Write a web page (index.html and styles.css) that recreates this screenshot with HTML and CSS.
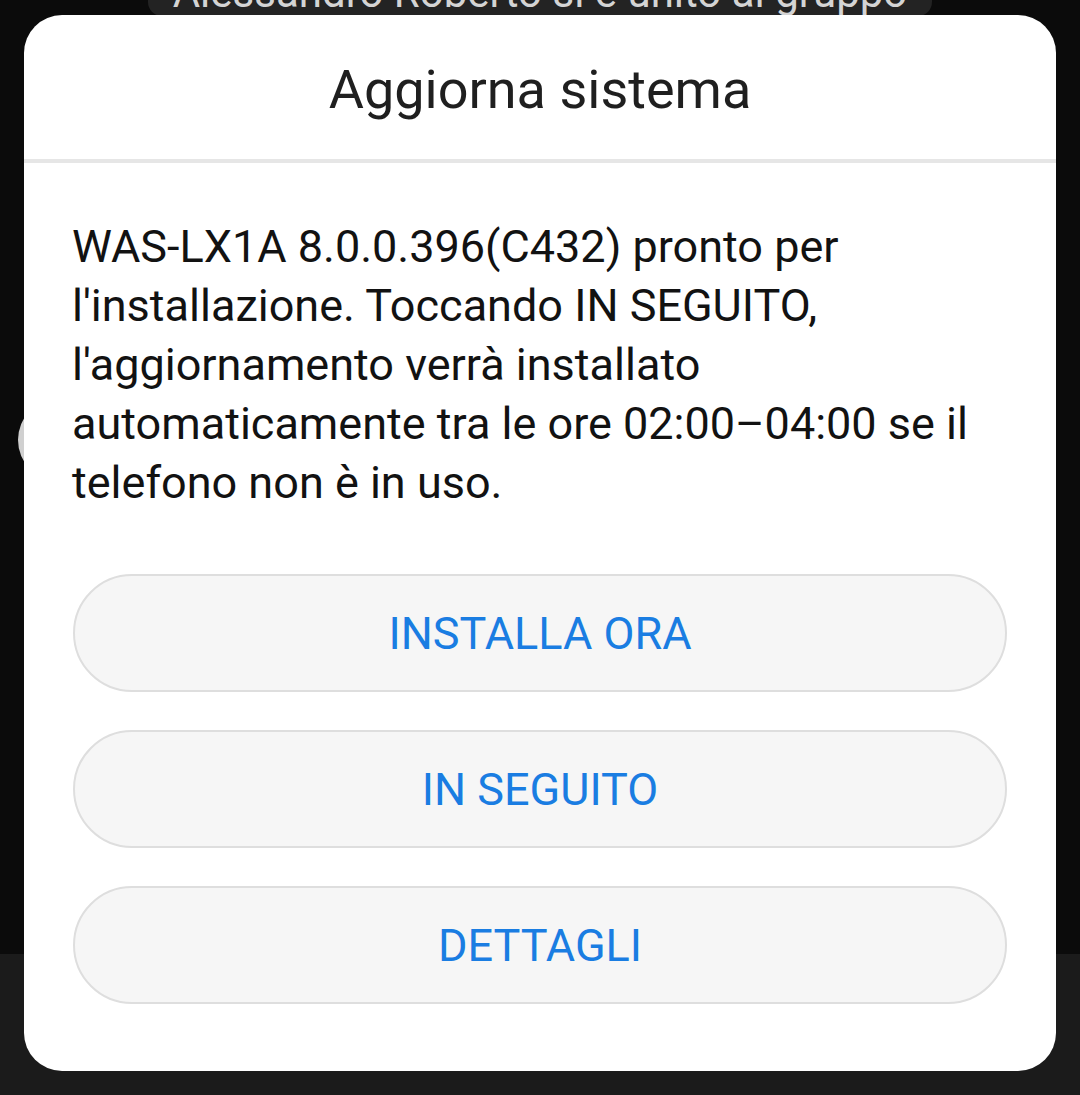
FILE: index.html
```html
<!DOCTYPE html>
<html lang="it">
<head>
<meta charset="utf-8">
<title>Aggiorna sistema</title>
<link rel="stylesheet" href="styles.css">
</head>
<body>
<div class="screen">
  <div class="backdrop-top">
    <div class="toast"><span class="toast-text">Alessandro Roberto si è unito al gruppo</span></div>
    <div class="side-bubble"></div>
  </div>
  <div class="backdrop-bottom"></div>

  <div class="dialog" role="dialog">
    <div class="dialog-title">Aggiorna sistema</div>
    <div class="divider"></div>
    <p class="dialog-message">WAS-LX1A 8.0.0.396(C432) pronto per l'installazione. Toccando IN SEGUITO, l'aggiornamento verrà installato automaticamente tra le ore 02:00–04:00 se il telefono non è in uso.</p>
    <div class="actions">
      <button class="btn">INSTALLA ORA</button>
      <button class="btn">IN SEGUITO</button>
      <button class="btn">DETTAGLI</button>
    </div>
  </div>
</div>
</body>
</html>
```

FILE: styles.css
```css
html, body {
  margin: 0;
  padding: 0;
}

body {
  background: #0b0b0b;
  font-family: Roboto, "Noto Sans", "Liberation Sans", sans-serif;
}

.screen {
  position: relative;
  width: 1080px;
  height: 1095px;
  overflow: hidden;
  display: flex;
  flex-direction: column;
}

.backdrop-top {
  position: relative;
  height: 954px;
  background: #0b0b0b;
}

.backdrop-bottom {
  flex: 1;
  background: #1b1b1b;
}

.toast {
  position: absolute;
  left: 148px;
  top: 0;
  width: 784px;
  height: 16px;
  border-radius: 0 0 14px 14px;
  background: #232323;
  overflow: hidden;
  text-align: center;
}

.toast-text {
  display: block;
  margin-top: -28px;
  color: #d4d4d4;
  font-size: 42px;
  line-height: 42px;
  white-space: nowrap;
}

.side-bubble {
  position: absolute;
  left: 18px;
  top: 398px;
  width: 84px;
  height: 84px;
  border-radius: 50%;
  background: #d0d0d0;
}

.dialog {
  position: absolute;
  left: 24px;
  top: 15px;
  width: 1032px;
  height: 1056px;
  box-sizing: border-box;
  background: #ffffff;
  border-radius: 38px;
  display: flex;
  flex-direction: column;
}

.dialog-title {
  height: 144px;
  display: flex;
  align-items: center;
  justify-content: center;
  padding-top: 4px;
  box-sizing: border-box;
  font-size: 54px;
  color: #1f1f1f;
}

.divider {
  height: 4px;
  background: #e6e6e6;
}

.dialog-message {
  margin: 0;
  padding: 54px 48px 0 48px;
  font-size: 45px;
  line-height: 59px;
  color: #121212;
}

.actions {
  display: flex;
  flex-direction: column;
  gap: 38px;
  padding: 62px 49px 0 49px;
}

.btn {
  height: 118px;
  border: 2px solid #dedede;
  border-radius: 59px;
  background: #f6f6f6;
  color: #1a7de2;
  font-family: Roboto, "Noto Sans", "Liberation Sans", sans-serif;
  font-size: 45px;
  padding: 0;
  cursor: pointer;
}
```
